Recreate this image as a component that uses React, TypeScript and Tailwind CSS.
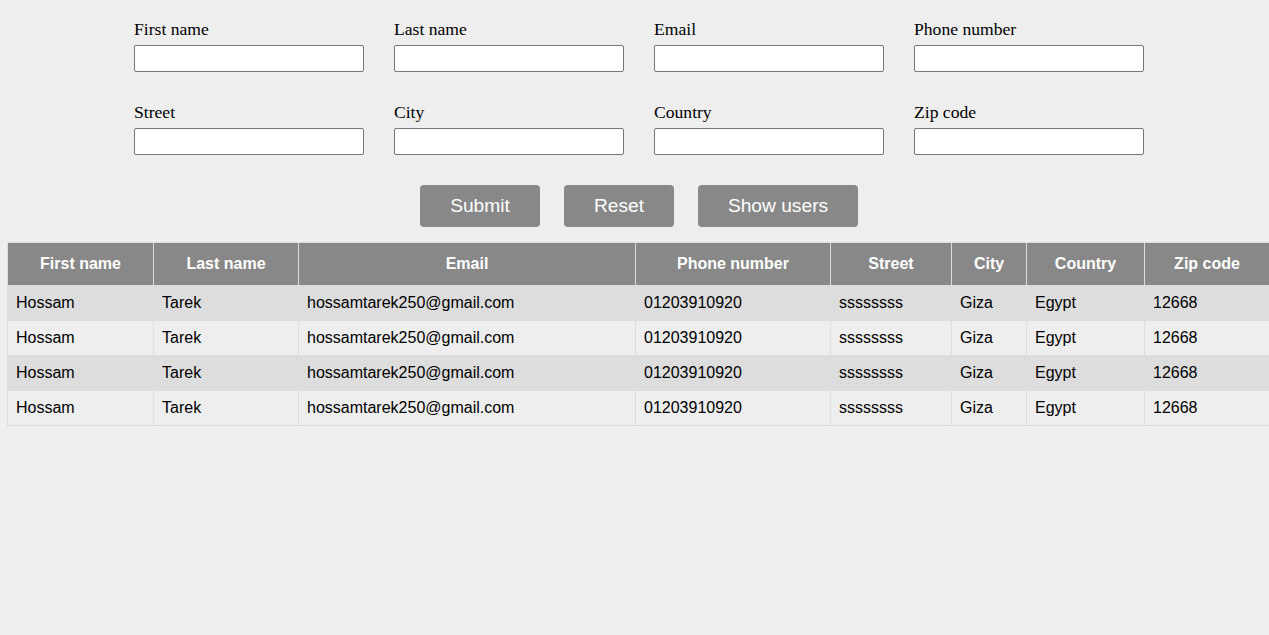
import React from "react";

const fields = [
  "First name",
  "Last name",
  "Email",
  "Phone number",
  "Street",
  "City",
  "Country",
  "Zip code",
];

const cols = [
  { h: "First name", w: 146 },
  { h: "Last name", w: 145 },
  { h: "Email", w: 337 },
  { h: "Phone number", w: 195 },
  { h: "Street", w: 121 },
  { h: "City", w: 75 },
  { h: "Country", w: 118 },
  { h: "Zip code", w: 125 },
];

const row = [
  "Hossam",
  "Tarek",
  "hossamtarek250@gmail.com",
  "01203910920",
  "ssssssss",
  "Giza",
  "Egypt",
  "12668",
];

export default function App() {
  return (
    <div className="min-h-[635px] w-full bg-[#eeeeee] overflow-hidden">
      <div className="pl-[134px] pt-[18px]">
        <div className="grid grid-cols-[230px_230px_230px_230px] gap-x-[30px] gap-y-[29px]">
          {fields.map((f) => (
            <div key={f} className="flex flex-col">
              <label className="block text-[17.6px] leading-[22px] text-black font-['Liberation_Serif',serif]">
                {f}
              </label>
              <input
                type="text"
                className="mt-[5px] h-[27px] w-[230px] bg-white border border-[#767676] rounded-[2px]"
              />
            </div>
          ))}
        </div>
      </div>
      <div className="mt-[30px] flex justify-center gap-[24px] pl-[9px]">
        <button className="h-[42px] w-[120px] rounded-[4px] bg-[#888888] text-white text-[19.2px] font-['Liberation_Sans',sans-serif]">
          Submit
        </button>
        <button className="h-[42px] w-[110px] rounded-[4px] bg-[#888888] text-white text-[19.2px] font-['Liberation_Sans',sans-serif]">
          Reset
        </button>
        <button className="h-[42px] w-[160px] rounded-[4px] bg-[#888888] text-white text-[19.2px] font-['Liberation_Sans',sans-serif]">
          Show users
        </button>
      </div>
      <div className="mt-[15px] pl-[7px]">
        <table className="table-fixed border-collapse w-[1262px] font-['Liberation_Sans',sans-serif] text-[16px]">
          <colgroup>
            {cols.map((c) => (
              <col key={c.h} style={{ width: c.w }} />
            ))}
          </colgroup>
          <thead>
            <tr className="h-[43px] bg-[#888888]">
              {cols.map((c) => (
                <th
                  key={c.h}
                  className="border border-[#dddddd] text-white font-bold text-center px-[8px]"
                >
                  {c.h}
                </th>
              ))}
            </tr>
          </thead>
          <tbody>
            {[0, 1, 2, 3].map((i) => (
              <tr
                key={i}
                className={`h-[35px] ${i % 2 === 0 ? "bg-[#dddddd]" : "bg-[#eeeeee]"}`}
              >
                {row.map((v, j) => (
                  <td
                    key={j}
                    className="border border-[#dddddd] text-left px-[8px] text-black"
                  >
                    {v}
                  </td>
                ))}
              </tr>
            ))}
          </tbody>
        </table>
      </div>
    </div>
  );
}
